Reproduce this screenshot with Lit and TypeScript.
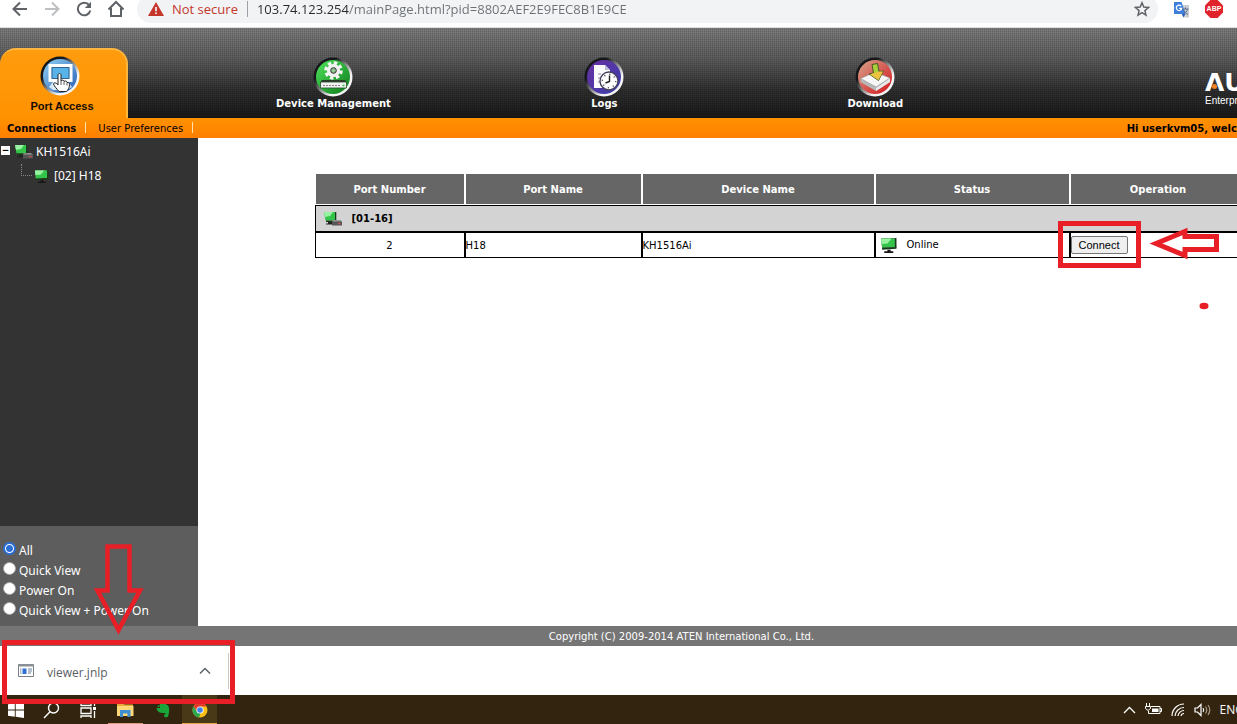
import { LitElement, html, css, svg } from "lit";
import { customElement, state } from "lit/decorators.js";

const backIcon = svg`<svg width="16" height="16" viewBox="0 0 16 16" fill="none" stroke="#5f6368" stroke-width="2"><path d="M15 8H2M8 1.5L1.5 8L8 14.5"/></svg>`;
const forwardIcon = svg`<svg width="16" height="16" viewBox="0 0 16 16" fill="none" stroke="#bdc0c3" stroke-width="2"><path d="M1 8H14M8 1.5L14.5 8L8 14.5"/></svg>`;
const reloadIcon = svg`<svg width="16" height="16" viewBox="0 0 16 16" fill="none" stroke="#5f6368" stroke-width="2"><path d="M13.2 4.2A6.3 6.3 0 1 0 14.3 9.5"/><path d="M15 .8V7H8.8Z" fill="#5f6368" stroke="none"/></svg>`;
const homeIcon = svg`<svg width="16" height="18" viewBox="1 0 16 18" fill="none" stroke="#5f6368" stroke-width="2"><path d="M1.5 9.5L9 2L16.500 9.500M4 8V16H14V8"/></svg>`;
const warnIcon = svg`<svg width="16" height="14" viewBox="0 0 16 14"><path d="M8 0L16 14H0Z" fill="#c5372c"/><path d="M7.200 5h1.600v4.200H7.200zM7.200 10.400h1.600V12H7.200z" fill="#fff"/></svg>`;
const starIcon = svg`<svg width="16" height="16" viewBox="0 0 16 16" fill="none" stroke="#5f6368" stroke-width="1.500"><path d="M8 1.800L9.800 6.100L14.500 6.500L10.900 9.600L12 14.200L8 11.700L4 14.200L5.100 9.600L1.500 6.500L6.200 6.100Z"/></svg>`;
const translateIcon = svg`<svg width="17" height="17" viewBox="0 0 17 17"><path d="M6 4H16V16.500H10Z" fill="#c9cdd2"/><path d="M1 1H8.500L12.500 13H1Z" fill="#3f7fdc"/><path d="M8.200 5.200A2.700 2.700 0 1 0 8.700 7.300H6.200" fill="none" stroke="#fff" stroke-width="1.300"/><path d="M9.500 8H15.500M12.500 6.500V8M14.500 8C14 10.500 12 12 10.800 13M11 9.500C12 11.500 13.500 12.700 15 13.300" fill="none" stroke="#5b6f8c" stroke-width="1"/><path d="M9 13H12.500L10.300 16.300Z" fill="#2458b3"/></svg>`;

const monitor = (w: number) => svg`<svg width=${w} height=${w} viewBox="0 0 16 16"><path d="M1 1L14 1L15.500 10L2 11Z" fill="#5c6b5c"/><path d="M1 1.500L14 1.500L14 9.500L2 10Z" fill="#35c44a"/><path d="M1 1.500L11 1.500L7 6L1.500 6.500Z" fill="#97f3a2"/><path d="M14 1H15.500V11L2 12V10.200L14 9.600Z" fill="#173a1a"/><path d="M7 12H10V13.500H12.500V15H4V13.500H7Z" fill="#161616"/></svg>`;
const switchIcon = svg`<svg width="18" height="16" viewBox="0 0 18 16"><path d="M0 1H11V9.500H1.500Z" fill="#35c44a"/><path d="M0 1H9L6 5L1 6Z" fill="#97f3a2"/><path d="M11 1H12.300V9H11ZM2 9.500H9V11H2Z" fill="#173a1a"/><path d="M4 11H8V13.500H2V12.500H4Z" fill="#222"/><path d="M8 9.500L15.500 9L18 10.500V14.500H8Z" fill="#555"/><path d="M8 9.500L15.500 9L18 10.500H9Z" fill="#9a9a9a"/><path d="M14 12H16.500V13.200H14Z" fill="#e05252"/></svg>`;

const disc = (id: string, a: string, b: string, art: unknown) => svg`<svg width="40" height="40" viewBox="0 0 40 40">
  <defs>
    <linearGradient id=${id + "r"} x1="0" y1="0" x2="1" y2="1"><stop offset=".3" stop-color="#15171a"/><stop offset=".7" stop-color="#f4f4f4"/></linearGradient>
    <linearGradient id=${id + "f"} x1="0" y1="0" x2="1" y2="1"><stop offset="0" stop-color=${a}/><stop offset="1" stop-color=${b}/></linearGradient>
  </defs>
  <circle cx="20" cy="20" r="19.500" fill=${`url(#${id}r)`}/><circle cx="20" cy="20" r="17" fill=${`url(#${id}f)`}/>${art}</svg>`;

const accessArt = svg`<path d="M9 31L13 26H28L32 31L27 34H13Z" fill="#d8eaf6"/><path d="M10 9.500H31V24.500H10Z" fill="#58b4e8" stroke="#fff" stroke-width="3"/><path d="M12 11.500H29V22.500H12Z" fill="none" stroke="#2c4f78" stroke-width=".8"/><path d="M18 19C18 17 21 17 21 19V25C22 23.500 24 24 24 25.500C25 24.500 27 25 27 26.500C28.500 26 29.500 27 29.500 28.500C29.500 32 28 34 26.500 35.500H19C17 33 14.500 30.500 13.500 28C14 26 16.500 27 18 29Z" fill="#fff" stroke="#222" stroke-width="1"/><path d="M21 25V29M24 26V29M27 27V29.500" stroke="#333" stroke-width=".8"/>`;
const deviceArt = svg`<circle cx="20.500" cy="13.500" r="7.500" fill="none" stroke="#f4f4f4" stroke-width="3.500" stroke-dasharray="3.400 2.490"/><circle cx="20.500" cy="13.500" r="6.600" fill="#f1f1f1"/><circle cx="20.500" cy="13.500" r="2.800" fill="#8fc98f" stroke="#2b2b2b" stroke-width="1"/><path d="M9 23H32L34 26H7Z" fill="#2c3a2c"/><path d="M7.500 25H33.500V31H7.500Z" fill="#f2f2f2" stroke="#254b25" stroke-width=".8"/><path d="M10 28.500H28" stroke="#888" stroke-width="1" stroke-dasharray="2 1"/><path d="M29.500 28.500H31.500" stroke="#2dbb34" stroke-width="1.500"/>`;
const logsArt = svg`<path d="M10 8H21L26 13V31H10Z" fill="#fafafa"/><path d="M21 8V13H26Z" fill="#bcbcd8"/><path d="M14 17H17M14 21H16M14 25H16" stroke="#8d80ad" stroke-width="1"/><circle cx="25" cy="24" r="9" fill="#fff" stroke="#45405c" stroke-width="1.400"/><circle cx="25" cy="24" r="6.700" fill="none" stroke="#555" stroke-width="1.400" stroke-dasharray="1.200 4.062"/><path d="M25.500 18.500V24.500L21.500 26" fill="none" stroke="#222" stroke-width="1.400"/>`;
const downloadArt = svg`<path d="M5.500 22L20 15L35 21.500V25L21 34L5.500 25Z" fill="#b9b9b9"/><path d="M5.500 21.500L20 15L35 21L21 30Z" fill="#f7f7f7" stroke="#8a8a8a" stroke-width=".6"/><path d="M21 31V34L35 25V21.500Z" fill="#e9e9e9"/><path d="M17 7.500L22.500 6.500L24 14.500L28.500 14L23.500 23.500L14 17L18.500 16Z" fill="#a8cf3a" stroke="#3c4f1c" stroke-width=".9"/><path d="M18.600 16L24 14.500L28 14.500L23.500 23L15 17.500Z" fill="#edc23e"/>`;

@customElement("app-root")
export class AppRoot extends LitElement {
  @state() private filter = "All";

  static styles = css`
    :host {
      display: flex;
      flex-direction: column;
      position: relative;
      height: 100vh;
      overflow: hidden;
      background: #fff;
      color: #000;
      font: 10px/16px "DejaVu Sans", Verdana, sans-serif;
    }
    * { box-sizing: border-box; }
    svg { display: block; flex: none; }
    button { font: inherit; padding: 0; border: 0; background: none; color: inherit; }
    a { color: inherit; text-decoration: none; }

    .browser { flex: none; height: 28px; overflow: hidden; border-bottom: 1px solid #dcdcdc; }
    .toolbar { display: flex; align-items: center; height: 28px; margin-top: -5px; padding: 0 14px 0 12px; }
    .nav { display: flex; align-items: center; gap: 16px; }
    .omnibox {
      flex: 1; display: flex; align-items: center; height: 28px; margin: 0 15px 0 13px; padding: 0 8px 0 11px;
      border-radius: 14px; background: #f1f3f4; font: 13px/20px "Open Sans", "Segoe UI", sans-serif;
    }
    .insecure { margin-left: 8px; color: #c5372c; }
    .rule { width: 1px; height: 16px; margin: 0 9px; background: #9aa0a6; }
    .url {
      flex: 1; min-width: 0; padding: 0; border: 0; outline: 0; font: inherit; color: #5f6368;
      background: linear-gradient(90deg, #27292c 92px, #6c7075 92px); -webkit-background-clip: text; background-clip: text;
      -webkit-text-fill-color: transparent;
    }
    .extensions { display: flex; align-items: center; gap: 15px; }
    .abp {
      width: 18px; height: 18px; background: #e1232b; color: #fff; font: bold 7px/18px "Liberation Sans", sans-serif; text-align: center;
      clip-path: polygon(30% 0, 70% 0, 100% 30%, 100% 70%, 70% 100%, 30% 100%, 0 70%, 0 30%);
    }

    .page { flex: 1; min-height: 0; display: flex; flex-direction: column; width: calc(100% + 126px); }
    .banner {
      flex: none; display: grid; grid-template-columns: 198px 1fr 1fr 1fr 1.3fr; height: 90px; color: #fff;
      background:
        repeating-linear-gradient(90deg, rgba(0, 0, 0, 0.12) 0 1px, transparent 1px 2px),
        repeating-linear-gradient(0deg, rgba(0, 0, 0, 0.12) 0 1px, transparent 1px 2px),
        linear-gradient(#828282, #5f5f5f 35%, #303030 70%, #1a1a1a);
    }
    .item { display: flex; flex-direction: column; align-items: center; padding-top: 29px; font-weight: bold; line-height: 14px; }
    .tab {
      width: 128px; margin-top: 20px; padding: 6px 6px 0 0; border-radius: 16px 16px 0 0; border-right: 2px solid #ffb63c; border-top: 2px solid #ffb63c;
      background: linear-gradient(#ff9c0e, #ff9200); color: #140b00; font: bold 11px/18px "Liberation Sans", Arial, sans-serif;
    }
    .tab svg { margin-bottom: 1px; }
    .tab span { padding-left: 4px; }
    .brand { justify-self: end; width: 158px; padding-top: 42px; }
    .mark { position: relative; font: bold 25px/26px "DejaVu Sans", Verdana, sans-serif; }
    .mark::after { content: ""; position: absolute; left: 7px; top: 14px; width: 5px; height: 5px; border-radius: 50%; background: #f58220; }
    .tag { font: 10px/10px "Liberation Sans", Arial, sans-serif; }

    .subnav { flex: none; display: flex; align-items: center; height: 20px; background: linear-gradient(#ff9200, #ff7f00); }
    .subnav a, .hello { padding: 2px 9px 0 7px; line-height: 20px; }
    .subnav a + i + a { padding: 2px 9px 0 12px; }
    .subnav i { width: 1px; height: 11px; margin-top: -2px; background: #ffe2ae; }
    .subnav .hello { margin-left: auto; padding-right: 102px; font-weight: bold; white-space: nowrap; }
    .subnav .on { font-weight: bold; }

    .main { flex: 1; min-height: 0; display: grid; grid-template-columns: 198px 1fr; }
    .side { display: flex; flex-direction: column; background: #333; color: #fff; font-family: "Noto Sans", Tahoma, sans-serif; font-size: 12px; }
    .tree { flex: 1; margin: 0; padding: 2px 0 0; list-style: none; }
    .node { display: flex; align-items: center; height: 24px; }
    .toggle { width: 9px; height: 9px; margin: 0 5px 4px 1px; background: #fff; color: #000; font: bold 9px/8px "DejaVu Sans", sans-serif; }
    .node svg { margin-right: 3px; }
    .leaf { padding-left: 34px; position: relative; }
    .leaf svg { margin-right: 5px; }
    .leaf::before { content: ""; position: absolute; left: 21px; top: 0; width: 10px; height: 11px; border: dotted #888; border-width: 0 0 1px 1px; }
    .filters { margin: 0; padding: 14px 0 6px 3px; border: 0; background: #5d5d5d; }
    .filters label { display: flex; align-items: center; height: 20px; gap: 3px; }
    .filters span { padding-top: 1px; }
    .filters input { appearance: none; flex: none; width: 13px; height: 13px; margin: 0 0 4px; border-radius: 50%; background: #fff; border: 1px solid #a5a5a5; }
    .filters input:checked { border: 2px solid #2b6fd6; background: radial-gradient(#2b6fd6 0 3px, #fff 4px); }

    .content { padding-top: 35px; }
    table { width: 932px; margin: 0 auto; border-spacing: 0; table-layout: fixed; }
    th, td { padding: 0; border: 1px solid #000; }
    th { height: 32px; padding-top: 2px; border-color: #fff; background: #666; color: #fff; }
    .group td { height: 27px; background: #d3d3d3; font-weight: bold; }
    .row td { height: 26px; }
    .row .text { padding-top: 2px; }
    .cell { display: flex; align-items: center; gap: 10px; padding-left: 8px; }
    .row .cell { padding-left: 4px; }
    .center { text-align: center; }
    .connect {
      display: block; width: 57px; height: 18px; border: 1px solid #767676; border-radius: 2px; background: #efefef;
      font: 11px/16px "Liberation Sans", Arial, sans-serif; color: #000;
    }
    .c1 { width: 150px; } .c2 { width: 177px; } .c3 { width: 233px; } .c4 { width: 195px; }
    .copyright { flex: none; height: 20px; padding-top: 1px; line-height: 20px; background: #757575; color: #fff; text-align: center; }

    .shelf { flex: none; display: flex; align-items: center; height: 49px; background: #fff; }
    .file { display: flex; align-items: center; width: 229px; height: 36px; padding: 0 17px 0 18px; border-right: 1px solid #c8c8c8; color: #5a5d61; font: 12px/20px "Open Sans", "Segoe UI", sans-serif; }
    .file span { margin: 4px auto 0 13px; }
    .taskbar { flex: none; display: flex; justify-content: space-between; height: 29px; background: #33240f; overflow: hidden; color: #fff; }
    .apps, .tray { display: flex; }
    .apps { gap: 2px; }
    .apps button { display: grid; place-items: center; width: 35px; height: 29px; padding-top: 1px; }
    .apps .open { border-bottom: 1px solid #e09a80; }
    .apps .active { background: #4a3917; border-bottom: 1px solid #e9a64a; }
    .apps .start { width: 32px; }
    .tray { align-items: center; gap: 9px; height: 29px; font: 12px/16px "Open Sans", "Segoe UI", sans-serif; margin-right: -7px; }

    .callout { position: absolute; border: 5px solid #e81f27; pointer-events: none; }
    .box-connect { left: 1058px; top: 221px; width: 83px; height: 47px; }
    .box-file { left: 2px; top: 640px; width: 233px; height: 64px; }
    .ink { position: absolute; pointer-events: none; }
    .arrow-left { left: 1148px; top: 226px; }
    .arrow-down { left: 92px; top: 542px; }
    .dot { left: 1199px; top: 302px; }
  `;

  private filters = ["All", "Quick View", "Power On", "Quick View + Power On"];

  render() {
    return html`
      <header class="browser">
        <div class="toolbar">
          <div class="nav">
            <button aria-label="Back">${backIcon}</button>
            <button aria-label="Forward">${forwardIcon}</button>
            <button aria-label="Reload">${reloadIcon}</button>
            <button aria-label="Home">${homeIcon}</button>
          </div>
          <div class="omnibox">
            ${warnIcon}<span class="insecure">Not secure</span><span class="rule"></span>
            <input class="url" aria-label="Address" value="103.74.123.254/mainPage.html?pid=8802AEF2E9FEC8B1E9CE" />
            <button aria-label="Bookmark">${starIcon}</button>
          </div>
          <div class="extensions">
            <button aria-label="Translate">${translateIcon}</button>
            <button class="abp">ABP</button>
          </div>
        </div>
      </header>

      <div class="page">
        <nav class="banner">
          <a class="item tab" href="#access">${disc("a", "#8fd0f4", "#2a5fb8", accessArt)}<span>Port Access</span></a>
          <a class="item" href="#device">${disc("d", "#4fe25a", "#0d7a1c", deviceArt)}Device Management</a>
          <a class="item" href="#logs">${disc("l", "#6a2fa0", "#3a3fae", logsArt)}Logs</a>
          <a class="item" href="#download">${disc("w", "#d8a58c", "#d4141c", downloadArt)}Download</a>
          <div class="brand"><div class="mark">ΛU</div><div class="tag">Enterprise</div></div>
        </nav>
        <nav class="subnav">
          <a class="on" href="#connections">Connections</a><i></i>
          <a href="#preferences">User Preferences</a><i></i>
          <span class="hello">Hi userkvm05, welcome</span>
        </nav>
        <div class="main">
          <aside class="side">
            <ul class="tree">
              <li class="node"><button class="toggle" aria-label="Collapse">−</button>${switchIcon}<span>KH1516Ai</span></li>
              <li class="node leaf">${monitor(15)}<span>[02] H18</span></li>
            </ul>
            <fieldset class="filters" aria-label="Show">
              ${this.filters.map(
                (name) => html`<label><input type="radio" name="filter" .checked=${this.filter === name} @change=${() => (this.filter = name)} /><span>${name}</span></label>`
              )}
            </fieldset>
          </aside>
          <main class="content">
            <table>
              <colgroup><col class="c1" /><col class="c2" /><col class="c3" /><col class="c4" /><col /></colgroup>
              <thead>
                <tr><th>Port Number</th><th>Port Name</th><th>Device Name</th><th>Status</th><th>Operation</th></tr>
              </thead>
              <tbody>
                <tr class="group"><td colspan="5"><div class="cell">${switchIcon}[01-16]</div></td></tr>
                <tr class="row">
                  <td class="text center">2</td><td class="text">H18</td><td class="text">KH1516Ai</td>
                  <td><div class="cell">${monitor(17)}Online</div></td>
                  <td><button class="connect">Connect</button></td>
                </tr>
              </tbody>
            </table>
          </main>
        </div>
        <footer class="copyright">Copyright (C) 2009-2014 ATEN International Co., Ltd.</footer>
      </div>

      <div class="shelf">
        <button class="file">
          <svg width="16" height="13" viewBox="0 0 16 13"><path d="M.5.5H15.500V12.500H.5Z" fill="#fff" stroke="#7b8087"/><path d="M0 0H16V2.500H0Z" fill="#8a9097"/><path d="M4.500 4.500H8.500V10H4.500Z" fill="#2d6fd2"/><path d="M2 5H3.500M2 7H3.500M2 9H3.500M10 5H14M10 7H14M10 9H13" stroke="#6c7fa0"/></svg>
          <span>viewer.jnlp</span>
          <svg width="12" height="8" viewBox="0 0 12 8" fill="none" stroke="#5f6368" stroke-width="1.500"><path d="M1 6.500L6 1.500L11 6.500"/></svg>
        </button>
      </div>
      <div class="taskbar">
        <div class="apps">
          <button class="start" aria-label="Start"><svg width="16" height="16" viewBox="0 0 16 16" fill="#fff"><path d="M0 2.300L6.800 1.300V7.500H0ZM7.700 1.200L16 0V7.500H7.700ZM0 8.400H6.800V14.700L0 13.700ZM7.700 8.400H16V16L7.700 14.800Z"/></svg></button>
          <button aria-label="Search"><svg width="17" height="17" viewBox="0 0 17 17" fill="none" stroke="#fff" stroke-width="1.400"><circle cx="10.500" cy="6" r="5"/><path d="M7 9.800L1 16"/></svg></button>
          <button aria-label="Task view"><svg width="17" height="15" viewBox="0 0 17 15" fill="none" stroke="#fff" stroke-width="1.300"><path d="M1 0V2.500H11V0M1 5H11V10.500H1ZM1 15V13H11V15M14.500 0V3M14.500 8V15"/><path d="M13 4H16V7H13Z" fill="#fff" stroke="none"/></svg></button>
          <button class="open" aria-label="File Explorer"><svg width="17" height="15" viewBox="0 0 17 15"><path d="M0 1H6L7.500 2.500H16V14H0Z" fill="#e9a93a"/><path d="M0 4H16.500V14H0Z" fill="#ffd777"/><path d="M3 15V8H13.500V15H10.500V11.500H6V15Z" fill="#3f8fd4"/></svg></button>
          <button aria-label="Evernote"><svg width="14" height="15" viewBox="0 0 14 15"><path d="M4 1C7 0 10 1 12 2.500C14 5 13 11 12 13.500C10.500 15 8 14.500 8 12.500C8 11.500 9 11 10 11.500C10 10 8.500 10 7.500 10C4 10 1 9 .5 5H4Z" fill="#1aa53a"/><path d="M1 4L3.500 1.500V4Z" fill="#1aa53a"/></svg></button>
          <button class="active" aria-label="Chrome"><svg width="16" height="16" viewBox="0 0 16 16"><circle cx="8" cy="8" r="7.500" fill="#fbc116"/><path d="M1.500 4.200A7.500 7.500 0 0 1 14.500 4.500H8L5 9.500Z" fill="#e33b2e"/><path d="M1.500 4.200L5 9.800L8.500 11.500L7 15.500A7.500 7.500 0 0 1 1.500 4.200Z" fill="#2da94f"/><circle cx="8" cy="8" r="3.600" fill="#fff"/><circle cx="8" cy="8" r="2.800" fill="#3f82ee"/></svg></button>
        </div>
        <div class="tray">
          <svg width="13" height="8" viewBox="0 0 13 8" fill="none" stroke="#fff" stroke-width="1.300"><path d="M1 7L6.500 1.500L12 7"/></svg>
          <svg width="17" height="13" viewBox="0 0 17 13" fill="none" stroke="#fff"><path d="M6 3.500H15V10.500H3.500V8M15 5.500H16.500V8.500H15M1.500 0V3M4.500 0V3M.5 3.500H5.500V5.500L3 7.500L.5 5.500Z"/><path d="M7 5.500H13.500V9H7Z" fill="#fff" stroke="none"/></svg>
          <svg width="14" height="14" viewBox="0 0 14 14" fill="none" stroke="#fff" stroke-width="1.200"><path d="M1 13A12 12 0 0 1 13 1M4 13A9 9 0 0 1 13 4.500M7 13A6 6 0 0 1 13 7.500M10 13A3 3 0 0 1 13 10.500"/></svg>
          <svg width="17" height="14" viewBox="0 0 17 14" fill="none" stroke="#fff" stroke-width="1.200"><path d="M1 5H3.500L7 1.500V12.500L3.500 9H1ZM9 5Q10.500 7 9 9"/><path d="M11.500 3.500Q14 7 11.500 10.500M14 2Q17.500 7 14 12" stroke="#a59a8a"/></svg>
          <span>ENG</span>
        </div>
      </div>

      <div class="callout box-connect"></div>
      <div class="callout box-file"></div>
      <svg class="ink arrow-left" width="72" height="36" viewBox="0 0 72 36" fill="none" stroke="#e81f27" stroke-width="5"><path d="M8 17.500L37 5.500V10.500H68.500V23.500H37V29.500Z"/></svg>
      <svg class="ink arrow-down" width="54" height="96" viewBox="0 0 54 96" fill="none" stroke="#e81f27" stroke-width="4.500"><path d="M15.500 4.500H37.500V48.500H48L26.500 88L5.500 48.500H15.500Z"/></svg>
      <svg class="ink dot" width="10" height="8" viewBox="0 0 10 8"><ellipse cx="5" cy="4" rx="4.500" ry="3.300" fill="#e81f27"/></svg>
    `;
  }
}
